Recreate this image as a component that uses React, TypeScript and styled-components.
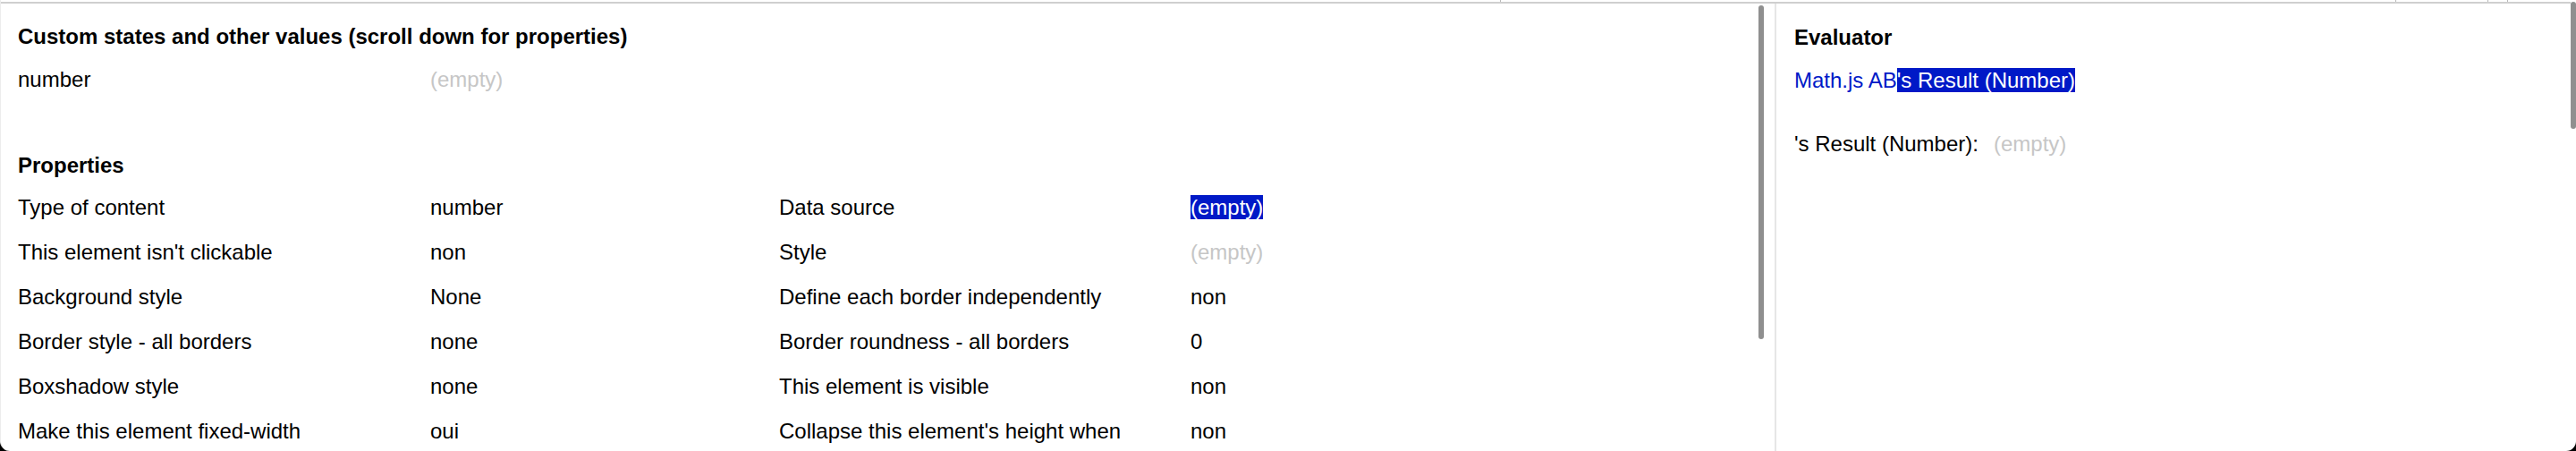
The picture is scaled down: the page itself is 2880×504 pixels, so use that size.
import React from "react";
import styled, { createGlobalStyle } from "styled-components";

const GlobalStyle = createGlobalStyle`
  html, body {
    margin: 0;
    padding: 0;
    background: #000;
  }
  body {
    font-family: "Liberation Sans", Arial, Helvetica, sans-serif;
    font-size: 24px;
    line-height: 34px;
    color: #000;
  }
`;

const Window = styled.div`
  width: 2880px;
  height: 504px;
  background: #fff;
  border-radius: 0 0 11px 11px;
  border-left: 1px solid #ececec;
  box-sizing: border-box;
  overflow: hidden;
  display: flex;
  flex-direction: column;
`;

const TopStrip = styled.div`
  height: 2px;
  display: flex;
  flex-shrink: 0;
`;

const Tick = styled.span<{ $gap: number }>`
  width: 1px;
  height: 2px;
  margin-left: ${(p) => p.$gap}px;
  background: #b8b8b8;
`;

const TopRule = styled.div`
  height: 2px;
  flex-shrink: 0;
  background: #cfcfcf;
  margin-right: 6px;
`;

const Main = styled.div`
  flex: 1;
  min-height: 0;
  display: flex;
  flex-direction: row;
`;

const LeftPane = styled.section`
  flex: 1;
  min-width: 0;
  padding: 20px 0 0 19px;
  overflow: hidden;
`;

const Thumb = styled.div<{ $h: number; $top: number }>`
  width: 6px;
  height: ${(p) => p.$h}px;
  margin-top: ${(p) => p.$top}px;
  border-radius: 3px;
  background: #8f8f8f;
  flex-shrink: 0;
`;

const LeftGutter = styled.div`
  width: 18px;
  flex-shrink: 0;
  display: flex;
  flex-direction: column;
`;

const Divider = styled.div`
  width: 2px;
  flex-shrink: 0;
  background: #e6e6e6;
`;

const RightPane = styled.section`
  width: 888px;
  flex-shrink: 0;
  padding: 21px 0 0 20px;
  box-sizing: border-box;
  overflow: hidden;
`;

const RightGutter = styled.div`
  width: 6px;
  flex-shrink: 0;
  margin-top: -2px;
  display: flex;
  flex-direction: column;
`;

const SectionTitle = styled.h2<{ $top?: number; $bottom?: number }>`
  margin: ${(p) => p.$top ?? 0}px 0 ${(p) => p.$bottom ?? 14}px 0;
  font-size: 24px;
  line-height: 34px;
  font-weight: bold;
`;

const PropGrid = styled.div`
  display: grid;
  grid-template-columns: 461px 390px 460px 1fr;
  row-gap: 16px;
`;

const CustomRow = styled.div`
  display: grid;
  grid-template-columns: 461px 1fr;
`;

const Label = styled.div`
  white-space: nowrap;
  line-height: 34px;
`;

const Value = styled.div<{ $empty?: boolean }>`
  white-space: nowrap;
  line-height: 34px;
  color: ${(p) => (p.$empty ? "#c6c6c6" : "#000")};
`;

const Selected = styled.span`
  background: #0019c7;
  color: #fff;
`;

const LinkLine = styled.div`
  margin-top: 5px;
  line-height: 34px;
  color: #0019c7;
  white-space: nowrap;
`;

const ResultLine = styled.div`
  margin-top: 37px;
  display: flex;
  gap: 17px;
  line-height: 34px;
  white-space: nowrap;
`;

const EmptyText = styled.span`
  color: #c6c6c6;
`;

type Prop = { label: string; value: string; empty?: boolean; selected?: boolean };

const rows: [Prop, Prop][] = [
  [
    { label: "Type of content", value: "number" },
    { label: "Data source", value: "(empty)", selected: true },
  ],
  [
    { label: "This element isn't clickable", value: "non" },
    { label: "Style", value: "(empty)", empty: true },
  ],
  [
    { label: "Background style", value: "None" },
    { label: "Define each border independently", value: "non" },
  ],
  [
    { label: "Border style - all borders", value: "none" },
    { label: "Border roundness - all borders", value: "0" },
  ],
  [
    { label: "Boxshadow style", value: "none" },
    { label: "This element is visible", value: "non" },
  ],
  [
    { label: "Make this element fixed-width", value: "oui" },
    { label: "Collapse this element's height when", value: "non" },
  ],
];

function Cell({ p }: { p: Prop }) {
  return (
    <>
      <Label>{p.label}</Label>
      <Value $empty={p.empty}>
        {p.selected ? <Selected>{p.value}</Selected> : p.value}
      </Value>
    </>
  );
}

export default function App() {
  return (
    <>
      <GlobalStyle />
      <Window>
        <TopStrip>
          <Tick $gap={1676} />
          <Tick $gap={1000} />
          <Tick $gap={102} />
          <Tick $gap={21} />
        </TopStrip>
        <TopRule />
        <Main>
          <LeftPane>
            <SectionTitle>Custom states and other values (scroll down for properties)</SectionTitle>
            <CustomRow>
              <Label>number</Label>
              <Value $empty>(empty)</Value>
            </CustomRow>
            <SectionTitle $top={62} $bottom={13}>Properties</SectionTitle>
            <PropGrid>
              {rows.map(([a, b], i) => (
                <React.Fragment key={i}>
                  <Cell p={a} />
                  <Cell p={b} />
                </React.Fragment>
              ))}
            </PropGrid>
          </LeftPane>
          <LeftGutter>
            <Thumb $h={373} $top={2} />
          </LeftGutter>
          <Divider />
          <RightPane>
            <SectionTitle>Evaluator</SectionTitle>
            <LinkLine>
              Math.js AB<Selected>'s Result (Number)</Selected>
            </LinkLine>
            <ResultLine>
              <span>'s Result (Number):</span>
              <EmptyText>(empty)</EmptyText>
            </ResultLine>
          </RightPane>
          <RightGutter>
            <Thumb $h={142} $top={0} />
          </RightGutter>
        </Main>
      </Window>
    </>
  );
}
